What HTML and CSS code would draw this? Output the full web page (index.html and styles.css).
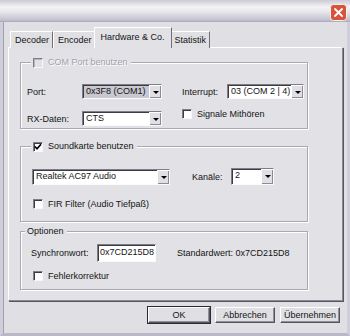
FILE: index.html
```html
<!DOCTYPE html>
<html lang="de">
<head>
    <meta charset="UTF-8">
    <title>Einstellungen</title>
    <link rel="stylesheet" href="styles.css">
</head>
<body>
    <div class="window">
        <div class="titlebar">
            <span class="close">
                <svg width="17" height="17" viewBox="0 0 17 17">
                    <rect x="0.5" y="0.5" width="16" height="16" rx="3" fill="#d9523a" stroke="#f4f1f1"/>
                    <path d="M5 5 L12 12 M12 5 L5 12" stroke="#fff" stroke-width="1.8" stroke-linecap="round"/>
                </svg>
            </span>
        </div>
        <div class="client">
            <div class="tabs">
                <div class="tab">Decoder</div>
                <div class="tab">Encoder</div>
                <div class="tab active">Hardware &amp; Co.</div>
                <div class="tab">Statistik</div>
            </div>
            <div class="panel">
                <fieldset class="group group-com">
                    <legend class="legend-check"><span class="check off"></span><span class="dim">COM Port benutzen</span></legend>
                    <div class="row row-port">
                        <span class="lbl lbl-port">Port:</span>
                        <div class="combo combo-port gray"><span>0x3F8 (COM1)</span><i class="arrow"></i></div>
                        <span class="lbl lbl-int">Interrupt:</span>
                        <div class="combo combo-int"><span>03 (COM 2 | 4)</span><i class="arrow"></i></div>
                    </div>
                    <div class="row row-rx">
                        <span class="lbl lbl-port">RX-Daten:</span>
                        <div class="combo combo-port"><span>CTS</span><i class="arrow"></i></div>
                        <label class="checkrow checkrow-sig"><span class="check"></span>Signale Mithören</label>
                    </div>
                </fieldset>

                <fieldset class="group group-sound">
                    <legend class="legend-check"><span class="check">
                        <svg width="8" height="8" viewBox="0 0 8 8"><path d="M1 3.5 L3 5.8 L7 1.2" fill="none" stroke="#000" stroke-width="1.7"/></svg>
                    </span>Soundkarte benutzen</legend>
                    <div class="row row-card">
                        <div class="combo combo-card"><span>Realtek AC97 Audio</span><i class="arrow"></i></div>
                        <span class="lbl lbl-kan">Kanäle:</span>
                        <div class="combo combo-kan"><span>2</span><i class="arrow"></i></div>
                    </div>
                    <label class="checkrow checkrow-fir"><span class="check"></span>FIR Filter (Audio Tiefpaß)</label>
                </fieldset>

                <fieldset class="group group-opt">
                    <legend class="legend-text">Optionen</legend>
                    <div class="row row-sync">
                        <span class="lbl lbl-sync">Synchronwort:</span>
                        <div class="field">0x7CD215D8</div>
                        <span class="std">Standardwert: 0x7CD215D8</span>
                    </div>
                    <label class="checkrow checkrow-fehler"><span class="check"></span>Fehlerkorrektur</label>
                </fieldset>
            </div>
            <div class="buttons">
                <button class="btn default">OK</button>
                <button class="btn">Abbrechen</button>
                <button class="btn">Übernehmen</button>
            </div>
        </div>
    </div>
</body>
</html>
```

FILE: styles.css
```css
body {
    margin: 0;
    padding: 0;
    font-family: "Liberation Sans", Arial, sans-serif;
    font-size: 9px;
    color: #141414;
    background-color: #e0dfe3;
}

.window {
    width: 350px;
    height: 336px;
    box-sizing: border-box;
    display: flex;
    flex-direction: column;
    background-color: #e0dfe3;
    overflow: hidden;
}

.titlebar {
    height: 22px;
    flex: none;
    display: flex;
    justify-content: flex-end;
    padding: 4px 3px 0 0;
    box-sizing: border-box;
    background: linear-gradient(to bottom, #cbcad5 0px, #f3f3f6 7px, #e7e6ec 12px, #c3c2cf 20px, #a9a8b8 22px);
}

.close {
    display: block;
    width: 17px;
    height: 17px;
}

.close svg {
    display: block;
}

.client {
    flex: 1;
    display: flex;
    flex-direction: column;
    padding: 6px 4px 0 5px;
    border-left: 3px solid #cfcedb;
    border-right: 3px solid #cfcedb;
    border-bottom: 3px solid #b9b8c6;
    box-shadow: inset 1px 0 0 #a2a1b1;
}

/* tab strip */
.tabs {
    display: flex;
    align-items: flex-end;
    height: 20px;
    padding-left: 2px;
    margin-bottom: -1px;
    position: relative;
    z-index: 1;
}

.tab {
    height: 17px;
    box-sizing: border-box;
    padding: 0 3px 0 4px;
    line-height: 16px;
    border-top: 1px solid #fff;
    border-left: 1px solid #fff;
    border-right: 1px solid #6f6e7c;
    background-color: #e0dfe3;
    white-space: nowrap;
}

.tab.active {
    height: 21px;
    margin: 0 -2px;
    padding: 0 6px 0 6px;
    line-height: 18px;
    position: relative;
    z-index: 2;
    background-color: #e2e1e6;
}

/* tab page */
.panel {
    height: 254px;
    flex: none;
    box-sizing: border-box;
    padding: 9px 0 0 11px;
    background-color: #e2e1e6;
    border-top: 1px solid #fff;
    border-left: 1px solid #fff;
    border-right: 1px solid #8a8996;
    border-bottom: 1px solid #8a8996;
    box-shadow: 1px 1px 0 #55545f;
}

.group {
    width: 288px;
    box-sizing: border-box;
    margin: 0;
    padding: 0 0 0 6px;
    border: 1px solid #a9a8b3;
    box-shadow: inset 1px 1px 0 #fff, 1px 1px 0 #fff;
}

.group legend {
    background-color: #e2e1e6;
    line-height: 11px;
}

.legend-check {
    display: flex;
    align-items: center;
    gap: 5px;
    margin-left: 4px;
    padding: 0 3px 0 2px;
}

.legend-text {
    margin-left: -2px;
    padding: 0 3px 0 2px;
}

.group-com {
    height: 72px;
}

.group-sound {
    height: 81px;
    margin-top: 12px;
}

.group-opt {
    height: 64px;
    margin-top: 4px;
}

.dim {
    color: #a3a2ab;
    text-shadow: 1px 1px 0 #fff;
}

.row {
    display: flex;
    align-items: center;
}

.row-port {
    margin-top: 16px;
}

.row-rx {
    margin-top: 12px;
}

.row-card {
    margin-top: 16px;
    padding-left: 5px;
}

.row-sync {
    margin-top: 7px;
    padding-left: 4px;
}

.lbl-port {
    width: 55px;
}

.lbl-int {
    width: 45px;
    margin-left: 20px;
}

.lbl-kan {
    width: 39px;
    margin-left: 22px;
}

.lbl-sync {
    width: 66px;
}

/* combo boxes */
.combo {
    height: 15px;
    box-sizing: border-box;
    display: flex;
    align-items: stretch;
    background-color: #fff;
    border-top: 1px solid #7e7d88;
    border-left: 1px solid #7e7d88;
    border-right: 1px solid #fbfbfd;
    border-bottom: 1px solid #fbfbfd;
    box-shadow: inset 1px 1px 0 #3c3b44;
}

.combo span {
    flex: 1;
    padding-left: 3px;
    line-height: 13px;
    white-space: nowrap;
    overflow: hidden;
}

.combo.gray {
    background-color: #c9c8d1;
}

.combo .arrow {
    width: 11px;
    flex: none;
    position: relative;
    background-color: #e0dfe3;
    border-top: 1px solid #fff;
    border-left: 1px solid #fff;
    box-shadow: inset -1px -1px 0 #8b8a96;
}

.combo .arrow::after {
    content: "";
    position: absolute;
    left: 3px;
    top: 5px;
    border-left: 3px solid transparent;
    border-right: 3px solid transparent;
    border-top: 3px solid #000;
}

.combo-port {
    width: 80px;
}

.combo-int {
    width: 77px;
}

.combo-card {
    width: 138px;
    height: 16px;
}

.combo-kan {
    width: 43px;
    height: 17px;
}

/* check boxes */
.check {
    width: 10px;
    height: 10px;
    box-sizing: border-box;
    flex: none;
    display: inline-flex;
    align-items: center;
    justify-content: center;
    background-color: #fff;
    border-top: 1px solid #7e7d88;
    border-left: 1px solid #7e7d88;
    border-right: 1px solid #f7f7f9;
    border-bottom: 1px solid #f7f7f9;
    box-shadow: inset 1px 1px 0 #3c3b44;
}

.check.off {
    background-color: #e2e1e6;
    box-shadow: inset 1px 1px 0 #b5b4be;
}

.check svg {
    display: block;
}

.checkrow {
    display: flex;
    align-items: center;
    gap: 5px;
}

.checkrow-sig {
    margin-left: 20px;
    margin-top: -9px;
}

.checkrow-fir {
    margin-top: 14px;
    padding-left: 6px;
}

.checkrow-fehler {
    margin-top: 9px;
    padding-left: 6px;
}

.field {
    width: 59px;
    height: 18px;
    box-sizing: border-box;
    padding-left: 2px;
    line-height: 15px;
    background-color: #fff;
    border-top: 1px solid #7e7d88;
    border-left: 1px solid #7e7d88;
    border-right: 1px solid #fbfbfd;
    border-bottom: 1px solid #fbfbfd;
    box-shadow: inset 1px 1px 0 #3c3b44;
}

.std {
    margin-left: 21px;
}

/* dialog buttons */
.buttons {
    display: flex;
    justify-content: flex-end;
    gap: 5px;
    margin-top: 6px;
    padding-right: 3px;
}

.btn {
    width: 60px;
    height: 16px;
    padding: 0;
    font-family: "Liberation Sans", Arial, sans-serif;
    font-size: 9px;
    color: #141414;
    background-color: #e0dfe3;
    border-top: 1px solid #fff;
    border-left: 1px solid #fff;
    border-right: 1px solid #55545f;
    border-bottom: 1px solid #55545f;
    box-shadow: inset -1px -1px 0 #8f8e9a;
}

.btn.default {
    width: 62px;
    outline: 1px solid #2c2b33;
}
```
